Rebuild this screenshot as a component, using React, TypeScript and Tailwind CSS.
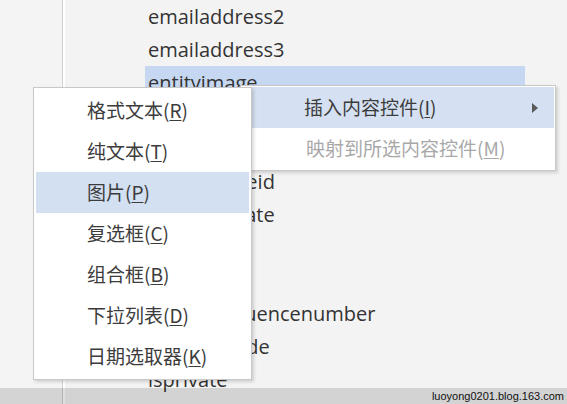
import React from 'react'

const fields = [
  'emailaddress2',
  'emailaddress3',
  'entityimage',
  'entityimage_url',
  'entityimage_ts',
  'entityimageid',
  'exchangerate',
  'fax',
  'fullname',
  'importsequencenumber',
  'industrycode',
  'isprivate',
  'lastusedincampaign',
]

const subItems = [
  { label: '格式文本', key: 'R' },
  { label: '纯文本', key: 'T' },
  { label: '图片', key: 'P', active: true },
  { label: '复选框', key: 'C' },
  { label: '组合框', key: 'B' },
  { label: '下拉列表', key: 'D' },
  { label: '日期选取器', key: 'K' },
]

const cjk = "font-['Noto_Sans_CJK_SC','Noto_Sans',sans-serif]"

function Label({ label, k }: { label: string; k: string }) {
  return (
    <span>
      {label}(<span className="underline underline-offset-2">{k}</span>)
    </span>
  )
}

export default function App() {
  return (
    <div className="relative w-[567px] h-[404px] overflow-hidden bg-[#f3f3f3] flex">
      {/* left gutter */}
      <div className="w-[62px] bg-[#f4f4f4]" />
      <div className="w-px bg-[#d0d0d0]" />
      <div className="w-[2px] bg-white" />

      {/* field list */}
      <div className="flex-1 pl-[80px] font-['Open_Sans',sans-serif] text-[20px] text-[#333]">
        {fields.map((f, i) => (
          <div
            key={f}
            className={`h-[33px] w-[380px] px-[3px] flex items-center ${i === 2 ? 'bg-[#c5d7f1]' : ''}`}
          >
            {f}
          </div>
        ))}
      </div>

      {/* main context menu */}
      <div className={`absolute left-[240px] top-[85px] w-[316px] bg-white border border-[#c8c8c8] p-[1px] shadow-[2px_2px_3px_rgba(0,0,0,0.15)] ${cjk} text-[19px]`}>
        <div className="h-[41px] bg-[#d5e1f2] flex items-center pl-[62px] pr-[16px] text-[#3c3c3c]">
          <Label label="插入内容控件" k="I" />
          <span className="ml-auto w-0 h-0 border-y-[5px] border-y-transparent border-l-[6px] border-l-[#5a5a5a]" />
        </div>
        <div className="h-[41px] flex items-center pl-[64px] text-[#a8a8a8]">
          <Label label="映射到所选内容控件" k="M" />
        </div>
      </div>

      {/* submenu */}
      <div className={`absolute left-[33px] top-[87px] w-[219px] bg-white border border-[#c8c8c8] p-[2px] shadow-[2px_2px_3px_rgba(0,0,0,0.15)] ${cjk} text-[19px] text-[#3c3c3c]`}>
        {subItems.map((it) => (
          <div
            key={it.key}
            className={`h-[41px] flex items-center pl-[51px] ${it.active ? 'bg-[#d3e0f2]' : ''}`}
          >
            <Label label={it.label} k={it.key} />
          </div>
        ))}
      </div>

      {/* watermark bar */}
      <div className="absolute left-0 right-0 bottom-0 h-[16px] bg-black/[0.13] flex items-center justify-end pr-[3px]">
        <span className="font-['Liberation_Sans',sans-serif] text-[11px] leading-none text-[#111]">
          luoyong0201.blog.163.com
        </span>
      </div>
    </div>
  )
}
